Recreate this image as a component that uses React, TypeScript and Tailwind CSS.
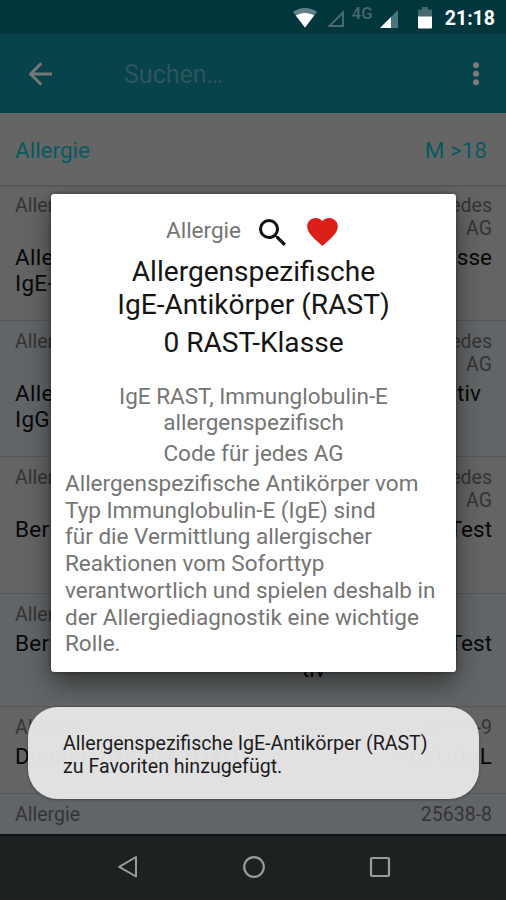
type ResultRow = {
  code: string;
  title: string;
  middle?: string;
  value: string;
};

const rows: ResultRow[] = [
  {
    code: 'Code für jedes\nAG',
    title: 'Allergenspezifische\nIgE-Antikörper',
    value: '0 RAST-Klasse\n ',
  },
  {
    code: 'Code für jedes\nAG',
    title: 'Allergenspezifische\nIgG Antikörper',
    value: 'negativ\u00a0\u00a0\n ',
  },
  {
    code: 'Code für jedes\nAG',
    title: 'Bernsteinsäure\n ',
    value: 'LTT-Test\n ',
  },
  {
    code: '',
    title: 'Bernsteinsäure',
    middle: 'nega-\ntiv',
    value: 'LTT-Test',
  },
  { code: '38179-9', title: 'Diaminooxidase (DAO)', value: '>10 U/mL' },
  { code: '25638-8', title: '', value: '' },
];

export default function App() {
  return (
    <div className="relative flex h-[900px] w-[506px] flex-col overflow-hidden bg-[#646464] font-['Roboto',sans-serif]">
      <StatusBar />
      <Toolbar />
      <FilterBar />
      <main className="-mt-[2px] min-h-0 flex-1 overflow-hidden">
        {rows.map((row, i) => (
          <Row key={i} row={row} tinted={i % 2 === 1} />
        ))}
      </main>
      <NavBar />
      <DetailDialog />
      <Toast />
    </div>
  );
}

function StatusBar() {
  return (
    <header className="flex h-[34px] shrink-0 items-center justify-end bg-[#00363c] pt-[2px] pr-[11px] text-white">
      <svg width="24" height="20" viewBox="0 0 24 20" className="mr-[10px]">
        <path d="M0 4C7-1.2 17-1.2 24 4L12 19.5Z" fill="#fff" fillOpacity=".38" />
        <path d="M2.8 7.6C8.5 4 15.5 4 21.2 7.6L12 19.5Z" fill="#fff" />
      </svg>
      <svg width="18" height="18" viewBox="0 0 18 18" className="mt-[1px] mr-[7px]">
        <path d="M2.5 16H16V2.5Z" fill="none" stroke="#47696d" strokeWidth="2" />
      </svg>
      <span className="mr-[7px] mb-[9px] w-[21px] text-[16.5px] leading-[18px] font-medium text-[#47696d]">4G</span>
      <svg width="18" height="18" viewBox="0 0 18 18" className="mt-[1px] mr-[20px]">
        <path d="M0 18H18V0Z" fill="#47777b" />
        <path d="M0 18H11V7Z" fill="#fff" />
      </svg>
      <svg width="14" height="22" viewBox="0 0 14 22" className="mr-[14px]">
        <path d="M4 0H10V2.5H13Q14 2.5 14 3.5V10H0V3.5Q0 2.5 1 2.5H4Z" fill="#47696d" />
        <path d="M0 9.5H14V20.5Q14 21.5 13 21.5H1Q0 21.5 0 20.5Z" fill="#fff" />
      </svg>
      <span className="-ml-[1px] pt-[2px] text-[19.5px] leading-none font-bold">21:18</span>
    </header>
  );
}

function Toolbar() {
  return (
    <div className="flex h-[79px] shrink-0 items-center bg-[#06434b] pr-[18px] pl-[29px]">
      <svg width="24" height="24" viewBox="0 0 24 24" fill="none" stroke="#777" strokeWidth="3">
        <path d="M23 12H2.5M12.3 1.3L1.7 12L12.3 22.7" />
      </svg>
      <span className="ml-[71px] flex-1 pt-[3px] text-[25px] text-[#2d555c]">Suchen…</span>
      <svg width="24" height="24" viewBox="0 0 24 24" fill="#7c7c7c">
        <circle cx="12" cy="3.3" r="3" />
        <circle cx="12" cy="11.8" r="3" />
        <circle cx="12" cy="20.3" r="3" />
      </svg>
    </div>
  );
}

function FilterBar() {
  return (
    <div className="z-10 flex h-[74px] shrink-0 items-center justify-between border-b-2 border-[#585858] bg-[#656565] pt-[3px] pr-[19px] pl-[15px] text-[22.5px] text-[#075a61]">
      <span>Allergie</span>
      <span>M &gt;18</span>
    </div>
  );
}

function Row({ row, tinted }: { row: ResultRow; tinted: boolean }) {
  return (
    <section
      className={`border-b border-[#565656] pt-[10px] pr-[14px] pb-[23.7px] pl-[15px] ${tinted ? 'bg-[#626567]' : 'bg-[#646464]'}`}
    >
      <div className="flex justify-between text-[19.5px] leading-[22.5px] text-[#343434]">
        <span>Allergie</span>
        <span className="text-right whitespace-pre">{row.code}</span>
      </div>
      <div className="mt-[3.5px] flex text-[22.5px] leading-[26.5px] text-[#080808]">
        <span className="w-[287px] tracking-[0.3px] whitespace-pre">{row.title}</span>
        <span className="w-[60px] whitespace-pre">{row.middle}</span>
        <span className="flex flex-1 justify-end text-right whitespace-pre">{row.value}</span>
      </div>
    </section>
  );
}

function DetailDialog() {
  return (
    <div
      role="dialog"
      className="absolute top-[194px] left-[51px] z-20 h-[478px] w-[405px] rounded-[3px] bg-white px-[14px] pt-[19px] text-[22.5px] leading-[26.75px] text-[#757575] shadow-[0_12px_26px_rgba(0,0,0,0.45),0_0_4px_rgba(0,0,0,0.4)]"
    >
      <div className="flex h-[38px] items-center pl-[101px]">
        <span className="w-[93px] pb-[3px]">Allergie</span>
        <svg width="27" height="27" viewBox="3 3 17.5 17.5" fill="#111">
          <path d="M15.5 14h-.79l-.28-.27A6.471 6.471 0 0 0 16 9.5 6.5 6.5 0 1 0 9.5 16c1.61 0 3.09-.59 4.23-1.57l.27.28v.79l5 4.99L20.49 19l-4.99-5zm-6 0C7.01 14 5 11.99 5 9.5S7.01 5 9.5 5 14 7.01 14 9.5 11.99 14 9.5 14z" />
        </svg>
        <svg width="31" height="28" viewBox="2 3 20 18.35" className="ml-[21px]" fill="#dc1e19">
          <path d="M12 21.35l-1.45-1.32C5.4 15.36 2 12.28 2 8.5 2 5.42 4.42 3 7.5 3c1.74 0 3.41.81 4.5 2.09C13.09 3.81 14.76 3 16.5 3 19.58 3 22 5.42 22 8.5c0 3.78-3.4 6.86-8.55 11.54L12 21.35z" />
        </svg>
      </div>
      <h1 className="mt-[4px] text-center text-[28.1px] leading-[33px] whitespace-pre text-[#151515]">
        {'Allergenspezifische\nIgE-Antikörper (RAST)'}
      </h1>
      <p className="mt-[5px] text-center text-[28.1px] leading-[33px] text-[#151515]">0 RAST-Klasse</p>
      <p className="mt-[23.5px] text-center whitespace-pre">{'IgE RAST, Immunglobulin-E\nallergenspezifisch'}</p>
      <p className="mt-[3.5px] text-center">Code für jedes AG</p>
      <p className="mt-[3.5px] whitespace-pre">
        {
          'Allergenspezifische Antikörper vom\nTyp Immunglobulin-E (IgE) sind\nfür die Vermittlung allergischer\nReaktionen vom Soforttyp\nverantwortlich und spielen deshalb in\nder Allergiediagnostik eine wichtige\nRolle.'
        }
      </p>
    </div>
  );
}

function Toast() {
  return (
    <div
      role="status"
      className="absolute top-[707px] left-[28px] z-30 flex h-[92px] w-[451px] items-center rounded-[30px] bg-[#e5e5e5]/97 pt-[3px] pl-[35px] text-[19.6px] leading-[23px] whitespace-pre text-[#1c1c1c] shadow-[0_1px_3px_rgba(0,0,0,0.3)]"
    >
      {'Allergenspezifische IgE-Antikörper (RAST)\nzu Favoriten hinzugefügt.'}
    </div>
  );
}

function NavBar() {
  return (
    <nav className="flex h-[66px] shrink-0 items-center justify-between border-t-2 border-[#101414] bg-[#1c2121] pr-[114px] pb-[2px] pl-[117px]">
      <svg width="22" height="24" viewBox="0 0 22 24" fill="none" stroke="#999c9c" strokeWidth="2">
        <path d="M19 2V21.5L2.2 11.8Z" strokeLinejoin="round" />
      </svg>
      <svg width="24" height="24" viewBox="0 0 24 24" fill="none" stroke="#999c9c" strokeWidth="2.2">
        <circle cx="12" cy="12" r="9.8" />
      </svg>
      <svg width="24" height="24" viewBox="0 0 24 24" fill="none" stroke="#999c9c" strokeWidth="2.2">
        <rect x="3" y="3" width="18" height="18" rx="1" />
      </svg>
    </nav>
  );
}
